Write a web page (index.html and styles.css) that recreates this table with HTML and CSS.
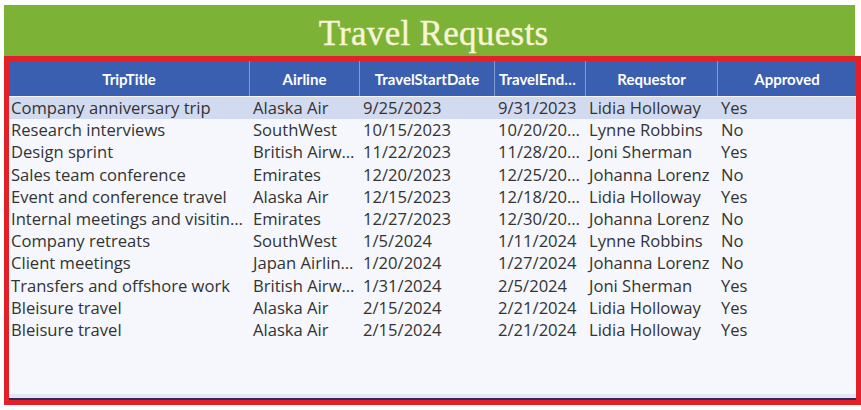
FILE: index.html
```html
<!DOCTYPE html>
<html>
<head>
<meta charset="utf-8">
<link rel="stylesheet" href="styles.css">
</head>
<body>
<div class="app">
  <header class="titlebar"><h1 class="title">Travel Requests</h1></header>
  <section class="frame">
    <div class="grid">
      <div class="hcell">TripTitle</div>
      <div class="hcell">Airline</div>
      <div class="hcell">TravelStartDate</div>
      <div class="hcell left">TravelEnd…</div>
      <div class="hcell">Requestor</div>
      <div class="hcell">Approved</div>
    </div>
    <div class="rows">
      <div class="grid row selected"><div class="cell first">Company anniversary trip</div><div class="cell">Alaska Air</div><div class="cell">9/25/2023</div><div class="cell">9/31/2023</div><div class="cell">Lidia Holloway</div><div class="cell">Yes</div></div>
      <div class="grid row"><div class="cell first">Research interviews</div><div class="cell">SouthWest</div><div class="cell">10/15/2023</div><div class="cell">10/20/20…</div><div class="cell">Lynne Robbins</div><div class="cell">No</div></div>
      <div class="grid row"><div class="cell first">Design sprint</div><div class="cell">British Airw…</div><div class="cell">11/22/2023</div><div class="cell">11/28/20…</div><div class="cell">Joni Sherman</div><div class="cell">Yes</div></div>
      <div class="grid row"><div class="cell first">Sales team conference</div><div class="cell">Emirates</div><div class="cell">12/20/2023</div><div class="cell">12/25/20…</div><div class="cell">Johanna Lorenz</div><div class="cell">No</div></div>
      <div class="grid row"><div class="cell first">Event and conference travel</div><div class="cell">Alaska Air</div><div class="cell">12/15/2023</div><div class="cell">12/18/20…</div><div class="cell">Lidia Holloway</div><div class="cell">Yes</div></div>
      <div class="grid row"><div class="cell first">Internal meetings and visitin…</div><div class="cell">Emirates</div><div class="cell">12/27/2023</div><div class="cell">12/30/20…</div><div class="cell">Johanna Lorenz</div><div class="cell">No</div></div>
      <div class="grid row"><div class="cell first">Company retreats</div><div class="cell">SouthWest</div><div class="cell">1/5/2024</div><div class="cell">1/11/2024</div><div class="cell">Lynne Robbins</div><div class="cell">No</div></div>
      <div class="grid row"><div class="cell first">Client meetings</div><div class="cell">Japan Airlin…</div><div class="cell">1/20/2024</div><div class="cell">1/27/2024</div><div class="cell">Johanna Lorenz</div><div class="cell">No</div></div>
      <div class="grid row"><div class="cell first">Transfers and offshore work</div><div class="cell">British Airw…</div><div class="cell">1/31/2024</div><div class="cell">2/5/2024</div><div class="cell">Joni Sherman</div><div class="cell">Yes</div></div>
      <div class="grid row"><div class="cell first">Bleisure travel</div><div class="cell">Alaska Air</div><div class="cell">2/15/2024</div><div class="cell">2/21/2024</div><div class="cell">Lidia Holloway</div><div class="cell">Yes</div></div>
      <div class="grid row"><div class="cell first">Bleisure travel</div><div class="cell">Alaska Air</div><div class="cell">2/15/2024</div><div class="cell">2/21/2024</div><div class="cell">Lidia Holloway</div><div class="cell">Yes</div></div>
    </div>
  </section>
</div>
</body>
</html>
```

FILE: styles.css
```css
html, body {
  margin: 0;
  padding: 0;
  background: #ffffff;
}
.app {
  padding: 5px 0 5px 4px;
  width: 857px;
}
.titlebar {
  width: 851px;
  height: 51px;
  background: #7cb236;
  display: flex;
  align-items: center;
  justify-content: center;
  padding-left: 8px;
  padding-top: 6px;
  box-sizing: border-box;
}
.title {
  margin: 0;
  font-family: "Liberation Serif", serif;
  font-weight: normal;
  font-size: 35px;
  color: #f8f5d6;
  letter-spacing: 0.3px;
  -webkit-text-stroke: 0.4px #f8f5d6;
}
.frame {
  border: 5px solid #e32027;
  height: 349px;
  box-sizing: border-box;
  background: #f5f7fc;
  display: flex;
  flex-direction: column;
}
.grid {
  display: grid;
  grid-template-columns: 240px 110px 135px 91px 132px 1fr;
}
.hcell {
  height: 35px;
  background: #3a5eb0;
  color: #ffffff;
  font-family: "Lato", sans-serif;
  font-weight: bold;
  font-size: 15px;
  display: flex;
  align-items: center;
  justify-content: center;
  border-left: 1px solid #7f9bd6;
  white-space: nowrap;
  overflow: hidden;
}
.hcell:first-child {
  border-left: none;
}
.hcell.left {
  justify-content: flex-start;
  padding-left: 4px;
}
.rows {
  flex: 1;
  padding-top: 1px;
  border-bottom: 2px solid #2c2a5c;
  box-shadow: inset 0 -4px 0 #e4e7f2;
}
.row {
  height: 22.2px;
}
.row.selected {
  background: #d2daef;
}
.cell {
  font-family: "Open Sans", sans-serif;
  font-size: 16.6px;
  color: #333333;
  line-height: 22.2px;
  padding-left: 4px;
  white-space: nowrap;
  overflow: hidden;
}
.cell.first {
  padding-left: 2px;
}
```
